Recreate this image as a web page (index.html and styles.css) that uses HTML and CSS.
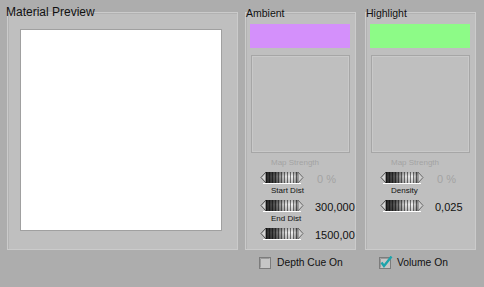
FILE: index.html
```html
<!DOCTYPE html>
<html lang="en">
<head>
    <meta charset="UTF-8">
    <title>Material Preview</title>
    <link rel="stylesheet" href="styles.css">
</head>
<body>
    <!-- shared dial graphic -->
    <svg class="defs" width="0" height="0">
        <defs>
            <linearGradient id="barrel" x1="0" y1="0" x2="1" y2="0">
                <stop offset="0" stop-color="#2b2b2b"/>
                <stop offset="0.3" stop-color="#5a5a5a"/>
                <stop offset="0.6" stop-color="#dcdcdc"/>
                <stop offset="0.82" stop-color="#f2f2f2"/>
                <stop offset="1" stop-color="#8c8c8c"/>
            </linearGradient>
            <linearGradient id="shade" x1="0" y1="0" x2="0" y2="1">
                <stop offset="0" stop-color="#000" stop-opacity="0.25"/>
                <stop offset="0.4" stop-color="#000" stop-opacity="0"/>
                <stop offset="1" stop-color="#000" stop-opacity="0.2"/>
            </linearGradient>
            <pattern id="ribs" width="3" height="13" patternUnits="userSpaceOnUse">
                <rect x="0" y="0" width="1" height="13" fill="#000" fill-opacity="0.5"/>
            </pattern>
            <symbol id="dial" viewBox="0 0 44 13">
                <path d="M6 1 L1 6.5 L6 12 Z" fill="#d6d6d6" stroke="#4a4a4a" stroke-width="1"/>
                <path d="M38 1 L43 6.5 L38 12 Z" fill="#cfcfcf" stroke="#6a6a6a" stroke-width="1"/>
                <rect x="6" y="1" width="32" height="11" fill="url(#barrel)"/>
                <rect x="6" y="1" width="32" height="11" fill="url(#ribs)"/>
                <rect x="6" y="1" width="32" height="11" fill="url(#shade)"/>
                <line x1="3" y1="12.5" x2="41" y2="12.5" stroke="#fff" stroke-width="1"/>
            </symbol>
        </defs>
    </svg>

    <div class="page">
        <!-- Material preview -->
        <div class="column preview-col">
            <div class="title big">Material Preview</div>
            <div class="panel preview-panel">
                <div class="preview"></div>
            </div>
        </div>

        <!-- Ambient -->
        <div class="column">
            <div class="title">Ambient</div>
            <div class="panel">
                <div class="swatch ambient"></div>
                <div class="map-box"></div>

                <div class="label disabled">Map Strength</div>
                <div class="ctrl">
                    <svg class="dial"><use href="#dial"/></svg>
                    <span class="value disabled pct">0 %</span>
                </div>

                <div class="label">Start Dist</div>
                <div class="ctrl">
                    <svg class="dial"><use href="#dial"/></svg>
                    <span class="value">300,000</span>
                </div>

                <div class="label">End Dist</div>
                <div class="ctrl">
                    <svg class="dial"><use href="#dial"/></svg>
                    <span class="value">1500,00</span>
                </div>
            </div>
            <label class="check">
                <svg class="box" width="14" height="13" viewBox="0 0 14 13">
                    <rect x="0.5" y="1.5" width="11" height="11" fill="#c6c6c6" stroke="#7c7c7c"/>
                    <path d="M1.5 2.5 H10.5 M1.5 2.5 V11.5" stroke="#9a9a9a"/>
                </svg>
                Depth Cue On
            </label>
        </div>

        <!-- Highlight -->
        <div class="column">
            <div class="title">Highlight</div>
            <div class="panel">
                <div class="swatch highlight"></div>
                <div class="map-box"></div>

                <div class="label disabled">Map Strength</div>
                <div class="ctrl">
                    <svg class="dial"><use href="#dial"/></svg>
                    <span class="value disabled pct">0 %</span>
                </div>

                <div class="label">Density</div>
                <div class="ctrl">
                    <svg class="dial"><use href="#dial"/></svg>
                    <span class="value">0,025</span>
                </div>
            </div>
            <label class="check">
                <svg class="box" width="14" height="13" viewBox="0 0 14 13">
                    <rect x="0.5" y="1.5" width="11" height="11" fill="#c6c6c6" stroke="#7c7c7c"/>
                    <path d="M1.5 2.5 H10.5 M1.5 2.5 V11.5" stroke="#9a9a9a"/>
                    <path d="M2.5 6.5 L5 10 L12.5 0.5" fill="none" stroke="#1da4ab" stroke-width="2.4"/>
                </svg>
                Volume On
            </label>
        </div>
    </div>
</body>
</html>
```

FILE: styles.css
```css
body {
    margin: 0;
    background-color: #adadad;
    font-family: "Liberation Sans", Arial, sans-serif;
    color: #111;
}

.defs {
    position: absolute;
    width: 0;
    height: 0;
}

.page {
    display: flex;
    padding-left: 7px;
    gap: 7px;
}

.column {
    display: flex;
    flex-direction: column;
    width: 111px;
}

.column + .column + .column {
    margin-left: 2px;
}

.preview-col {
    width: 231px;
}

.title {
    position: relative;
    z-index: 1;
    font-size: 10.5px;
    line-height: 12px;
    height: 12px;
    margin-top: 7px;
    margin-bottom: -7px;
    padding-left: 1px;
}

.title.big {
    font-size: 12px;
    line-height: 14px;
    height: 14px;
    margin-top: 5px;
    padding-left: 0;
    margin-left: -1px;
}

.panel {
    box-sizing: border-box;
    height: 238px;
    background-color: #bfbfbf;
    border: 1px solid #cbcbcb;
    box-shadow: inset 1px 1px 0 #b2b2b2;
    padding: 11px 5px 0 4px;
}

.preview-panel {
    padding: 16px 0 0 12px;
}

.preview {
    box-sizing: border-box;
    width: 202px;
    height: 202px;
    background-color: #fff;
    border: 1px solid #a0a0a0;
}

.swatch {
    height: 24px;
    width: 100px;
}

.swatch.ambient {
    background-color: #d490fb;
}

.swatch.highlight {
    background-color: #8dfb87;
}

.map-box {
    box-sizing: border-box;
    width: 99px;
    height: 98px;
    margin: 7px 0 5px 1px;
    border: 1px solid #a6a6a6;
    box-shadow: inset 0 0 0 1px #c9c9c9;
}

.label {
    font-size: 8px;
    line-height: 10px;
    height: 10px;
    padding-left: 21px;
}

.disabled {
    color: #a3a3a3;
}

.ctrl {
    display: flex;
    align-items: center;
    height: 14px;
    margin: 2px 0;
    padding-left: 10px;
}

.dial {
    width: 44px;
    height: 13px;
    flex: none;
}

.value {
    font-size: 11px;
    line-height: 12px;
    padding-top: 3px;
    margin-left: 11px;
}

.value.pct {
    margin-left: 13px;
}

.check {
    display: flex;
    align-items: center;
    gap: 4px;
    margin-top: 6px;
    padding-left: 14px;
    font-size: 10.3px;
    line-height: 13px;
    color: #111;
}

.box {
    flex: none;
}
```
